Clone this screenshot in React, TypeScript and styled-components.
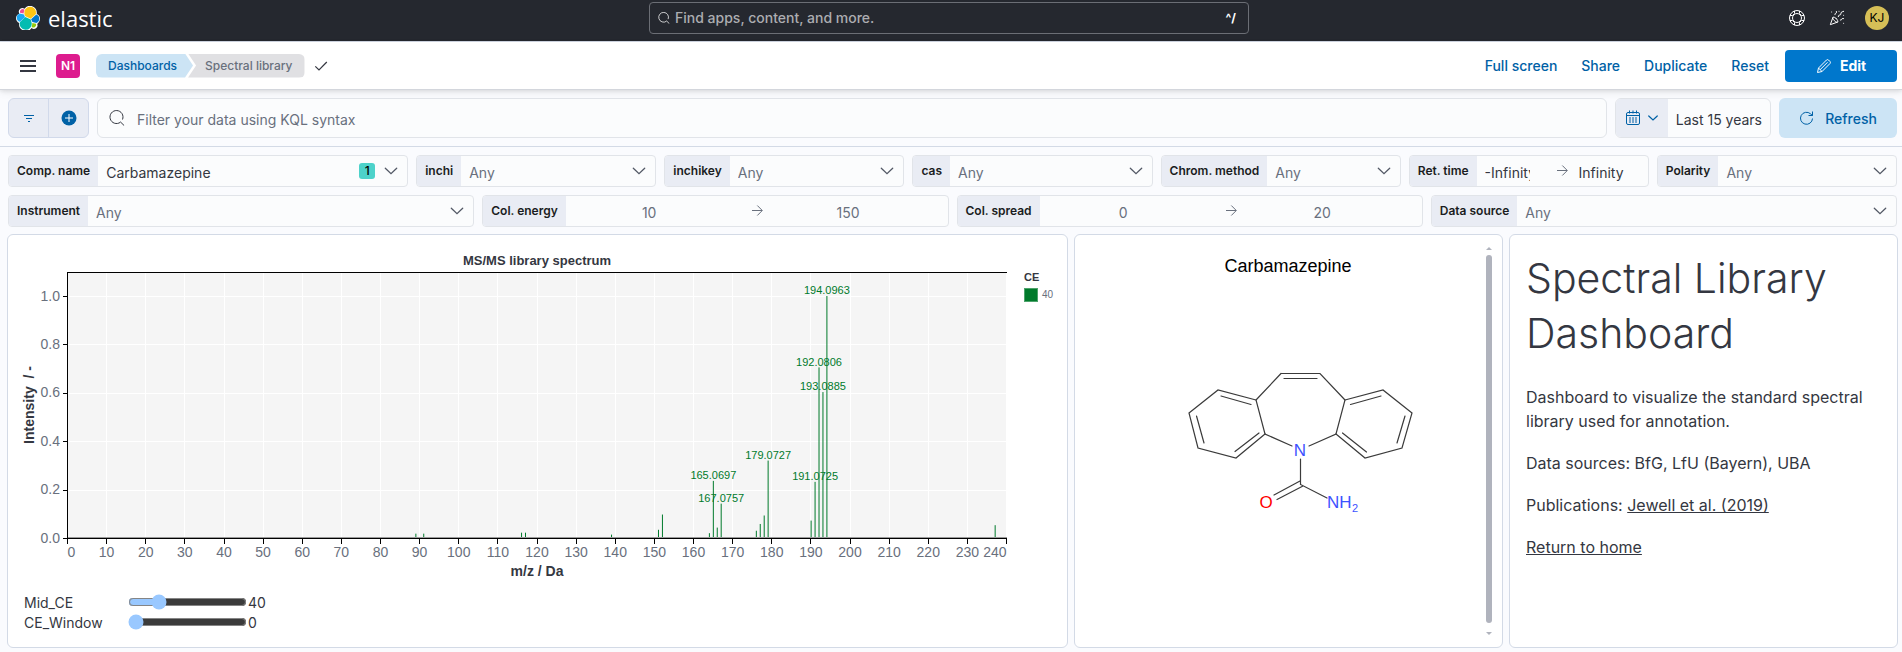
import React, { useState } from "react";
import styled, { createGlobalStyle } from "styled-components";
import { PartyPopper } from "lucide-react";

const Global = createGlobalStyle`
  * { box-sizing: border-box; }
  body { margin: 0; background: #fafbfe; color: #343741; font-family: Inter, "Liberation Sans", sans-serif; font-size: 14px; }
  button, input, select { font: inherit; color: inherit; margin: 0; }
  svg { display: block; flex: none; }
`;

const chartFont = '"Liberation Sans", Arial, sans-serif';

const TopBar = styled.header`
  display: grid;
  grid-template-columns: minmax(0, 633fr) 600px minmax(0, 640fr);
  align-items: center;
  height: 42px;
  padding: 0 13px 6px 16px;
  background: #25282f;
  border-bottom: 1px solid #d3dae6;
`;
const Brand = styled.a`
  display: flex;
  align-items: center;
  gap: 8px;
  color: #fff;
  text-decoration: none;
  font-family: "Open Sans", "Noto Sans", sans-serif;
  font-size: 22px;
  line-height: 24px;
`;
const GlobalSearch = styled.label`
  display: flex;
  align-items: center;
  gap: 5px;
  height: 32px;
  padding: 0 12px 0 8px;
  border: 1px solid #6b6e75;
  border-radius: 4px;
  color: #fff;
  input {
    flex: 1;
    min-width: 0;
    padding: 0;
    border: 0;
    outline: 0;
    background: none;
    font-weight: 500;
    &::placeholder { color: #acadb1; opacity: 1; }
  }
  kbd { font: 700 12px Inter, sans-serif; }
`;
const TopActions = styled.div`
  display: flex;
  justify-content: flex-end;
  align-items: center;
  gap: 24px;
`;
const IconButton = styled.button`
  display: flex;
  padding: 0;
  border: 0;
  background: none;
`;
const UserAvatar = styled.button`
  width: 24px;
  height: 24px;
  margin-left: -4px;
  padding: 0;
  border: 0;
  border-radius: 50%;
  background: #d6bf57;
  color: #000;
  font-size: 12px;
`;

const NavBar = styled.nav`
  position: relative;
  display: flex;
  align-items: center;
  height: 48px;
  padding: 0 5px 0 20px;
  background: #fff;
  border-bottom: 1px solid #d3d6dc;
  box-shadow: 0 1px 4px rgba(0, 0, 0, 0.1), 0 3px 8px rgba(0, 0, 0, 0.06);
`;
const SpaceAvatar = styled.button`
  width: 24px;
  height: 24px;
  margin: 0 16px 0 20px;
  padding: 0;
  border: 0;
  border-radius: 4px;
  background: #dd1c8e;
  color: #fff;
  font-size: 12px;
  font-weight: 600;
`;
const Crumbs = styled.div`
  display: flex;
  align-items: center;
  font-size: 12px;
  font-weight: 500;
  line-height: 24px;
`;
const CrumbLink = styled.a`
  padding: 0 16px 0 12px;
  border-radius: 6px 0 0 6px;
  background: #cce4f5;
  color: #0061a6;
  text-decoration: none;
  clip-path: polygon(0 0, calc(100% - 8px) 0, 100% 50%, calc(100% - 8px) 100%, 0 100%);
`;
const CrumbCurrent = styled.span`
  margin: 0 8px 0 -5px;
  padding: 0 12px 0 17px;
  border-radius: 0 6px 6px 0;
  background: #e0e0e3;
  color: #69707d;
  clip-path: polygon(0 0, 100% 0, 100% 100%, 0 100%, 8px 50%);
`;
const NavActions = styled.div`
  display: flex;
  align-items: center;
  gap: 8px;
  margin-left: auto;
`;
const TextButton = styled.button`
  height: 32px;
  padding: 0 8px;
  border: 0;
  background: none;
  color: #0061a6;
  font-weight: 500;
`;
const SolidButton = styled.button<{ $tone: "primary" | "soft" }>`
  display: flex;
  align-items: center;
  justify-content: center;
  gap: ${(p) => (p.$tone === "primary" ? 8 : 10)}px;
  width: ${(p) => (p.$tone === "primary" ? 112 : 118)}px;
  height: ${(p) => (p.$tone === "primary" ? 32 : 40)}px;
  padding: 0;
  border: 0;
  border-radius: ${(p) => (p.$tone === "primary" ? 4 : 6)}px;
  background: ${(p) => (p.$tone === "primary" ? "#0077cc" : "#cce4f5")};
  color: ${(p) => (p.$tone === "primary" ? "#fff" : "#0061a6")};
  font-weight: ${(p) => (p.$tone === "primary" ? 700 : 500)};
`;

const QueryBar = styled.section`
  display: flex;
  gap: 8px;
  padding: 8px 5px 8px 8px;
  border-bottom: 1px solid #d3dae6;
`;
const FilterGroup = styled.div`
  display: flex;
  width: 81px;
  height: 40px;
  border: 1px solid #d1d9ea;
  border-radius: 6px;
  background: #e9ecf4;
  overflow: hidden;
  button {
    flex: 1;
    display: flex;
    align-items: center;
    justify-content: center;
    padding: 0;
    border: 0;
    background: none;
  }
  button + button { border-left: 1px solid #d1d9ea; }
`;
const QueryInput = styled.label`
  flex: 1;
  display: flex;
  align-items: center;
  gap: 12px;
  height: 40px;
  padding: 0 11px;
  border: 1px solid #e1e4e9;
  border-radius: 6px;
  background: #fbfcfd;
  input {
    flex: 1;
    min-width: 0;
    padding: 2px 0 0;
    border: 0;
    outline: 0;
    background: none;
    &::placeholder { color: #69707d; opacity: 1; }
  }
`;
const DatePicker = styled.div`
  display: flex;
  height: 40px;
  border: 1px solid #e1e4e9;
  border-radius: 6px;
  background: #fbfcfd;
  overflow: hidden;
`;
const QuickSelect = styled.button`
  display: flex;
  align-items: center;
  gap: 6px;
  padding: 0 9px;
  border: 0;
  background: #e9ecf4;
  color: #0061a6;
`;
const DateText = styled.button`
  padding: 2px 8px 0;
  border: 0;
  background: none;
`;

const Controls = styled.section`
  display: grid;
  gap: 8px;
  padding: 8px 5px 7px 8px;
`;
const ControlRow = styled.div`
  display: flex;
  gap: 8px;
`;
const Control = styled.div<{ $grow: number }>`
  flex: ${(p) => p.$grow} 1 ${(p) => p.$grow}px;
  min-width: 0;
  display: flex;
  align-items: center;
  height: 32px;
  border: 1px solid #e1e4e9;
  border-radius: 4px;
  background: #fbfcfd;
  overflow: hidden;
  & > label {
    flex: none;
    padding: 0 8px;
    background: #e9ecf4;
    color: #1a1c21;
    font-size: 12px;
    font-weight: 600;
    line-height: 30px;
  }
`;
const Select = styled.select<{ $filled: boolean }>`
  flex: 1;
  min-width: 0;
  height: 30px;
  padding: 2px 8px 0;
  border: 0;
  outline: 0;
  appearance: none;
  background: none;
  color: ${(p) => (p.$filled ? "#343741" : "#69707d")};
`;
const CountBadge = styled.span`
  width: 16px;
  margin-right: 8px;
  border-radius: 3px;
  background: #4dd2ca;
  color: #000;
  font-size: 12px;
  font-weight: 500;
  line-height: 16px;
  text-align: center;
`;
const ChevronBox = styled.span`
  padding-right: 8px;
  color: #535966;
`;
const Range = styled.div<{ $strong: boolean }>`
  flex: 1;
  min-width: 0;
  display: flex;
  align-items: center;
  padding-right: 16px;
  color: #69707d;
  input {
    flex: 1 1 0;
    width: 0;
    height: 30px;
    padding: 2px 8px 0;
    border: 0;
    outline: 0;
    background: none;
    text-align: center;
    color: ${(p) => (p.$strong ? "#343741" : "#69707d")};
  }
  svg { margin-left: 16px; }
`;

const Panels = styled.main`
  display: grid;
  grid-template-columns: minmax(0, 1061fr) minmax(0, 429fr) minmax(0, 389fr);
  gap: 6px;
  padding: 0 4px 4px 7px;
`;
const Panel = styled.section`
  display: flex;
  min-height: 414px;
  border: 1px solid #d3dae6;
  border-radius: 6px;
  background: #fff;
`;
const ChartPanel = styled(Panel)`
  flex-direction: column;
`;
const Drawing = styled.svg`
  width: 100%;
  height: auto;
  font-family: ${chartFont};
`;
const Sliders = styled.div`
  padding: 7px 16px 0;
`;
const SliderRow = styled.div`
  display: flex;
  align-items: center;
  height: 20px;
  label { width: 104px; }
  input { width: 119px; height: 16px; margin-right: 1px; color-scheme: dark; }
`;
const StructurePanel = styled(Panel)`
  position: relative;
  align-items: flex-start;
`;
const Scrollbar = styled.div`
  position: absolute;
  top: 12px;
  right: 10px;
  bottom: 12px;
  display: flex;
  flex-direction: column;
  gap: 5px;
  width: 6px;
  color: #b0b3bd;
`;
const Thumb = styled.div`
  flex: 1;
  margin-bottom: 4px;
  border-radius: 3px;
  background: #b0b3bd;
`;
const NotePanel = styled(Panel)`
  display: block;
  padding: 16px;
  font-size: 16px;
  line-height: 24px;
  h1 {
    margin: 0 0 24px;
    font-size: 41px;
    font-weight: 300;
    line-height: 55px;
  }
  p { margin: 0 0 18px; }
  a { color: inherit; text-decoration: underline; }
`;

const ElasticMark = () => (
  <svg width="24" height="24" viewBox="0 0 24 24" aria-hidden="true">
    <path fill="#fff" d="M24 12.5c0-2.100-1.300-3.900-3.200-4.600A6.900 6.900 0 0 0 20.800 6.700 6.800 6.800 0 0 0 8.500 2.700 3.600 3.600 0 0 0 3 6.800c.0.300.1.700.2 1C1.300 8.500 0 10.300 0 12.300c0 2.100 1.300 3.900 3.200 4.600a6.900 6.900 0 0 0 12.400 5.200 3.600 3.600 0 0 0 5.600-4.200C22.900 16.400 24 14.600 24 12.500z" />
    <path fill="#fec514" d="M9.400 10.300l5.300 2.400 5.300-4.700A6 6 0 1 0 8.300 8z" />
    <path fill="#02bcb1" d="M4 16.100a6 6 0 1 0 11.700 1l-.9-3.500-5.500-2.600z" />
    <path fill="#f04e98" d="M4 6.700l3.600.9.800-4.100A2.900 2.900 0 0 0 4 6.700z" />
    <path fill="#1ba9f5" d="M3.700 7.500a4.400 4.400 0 0 0 .1 8.300l5.200-4.600-1-2.700z" />
    <path fill="#93c90e" d="M15.700 21a2.900 2.900 0 0 0 4.400-3.200l-3.700-.9z" />
    <path fill="#07c" d="M16.400 16l4 .9a4.400 4.400 0 0 0-.1-8.300l-5.200 4.600z" />
  </svg>
);
const SearchIcon = ({ size }: { size: number }) => (
  <svg width={size} height={size} viewBox="0 0 16 16" fill="none" stroke="currentColor" aria-hidden="true">
    <path d="M11.300 12.300A6.500 6.500 0 1 1 13.500 9.500M11.300 11.800l3.800 3.700" />
  </svg>
);
const Chevron = ({ size = 16 }: { size?: number }) => (
  <svg width={size} height={size} viewBox="0 0 16 16" fill="none" stroke="currentColor" strokeWidth={size < 16 ? 1.6 : 1.3} strokeLinecap="round" aria-hidden="true">
    <path d="M2.300 5.300 8 10.700l5.700-5.400" />
  </svg>
);
const ArrowRight = () => (
  <svg width="16" height="16" viewBox="0 0 16 16" fill="none" stroke="currentColor" aria-hidden="true">
    <path d="M3 7.500h10M8.300 2.500l5 5-5 5" />
  </svg>
);
const LifeRing = () => (
  <svg width="16" height="16" viewBox="0 0 16 16" fill="none" stroke="#fff" aria-hidden="true">
    <circle cx="8" cy="8" r="7.500" />
    <circle cx="8" cy="8" r="4.500" />
    <path d="M5.500 1v2.500L3.500 5.500H1M10.500 1v2.500l2 2H15M5.500 15v-2.500l-2-2H1M10.500 15v-2.500l2-2H15" />
  </svg>
);
const CalendarIcon = () => (
  <svg width="16" height="16" viewBox="0 0 16 16" fill="none" stroke="#0061a6" aria-hidden="true">
    <rect x="1.500" y="2.500" width="13" height="12" rx="1.500" />
    <path d="M1.500 5.500h13M4.500.5v3M8 .5v3M11.500.5v3" />
    <path d="M4 8h8M4 10h8M4 12h8" strokeDasharray="2 1" />
  </svg>
);

type SelectProps = { id: string; label: string; value?: string; count?: number; grow?: number };
const SelectControl = ({ id, label, value, count, grow = 240 }: SelectProps) => (
  <Control $grow={grow}>
    <label htmlFor={id}>{label}</label>
    <Select id={id} $filled={!!value}>
      <option>{value ?? "Any"}</option>
    </Select>
    {count !== undefined && <CountBadge>{count}</CountBadge>}
    <ChevronBox><Chevron /></ChevronBox>
  </Control>
);
type RangeProps = { id: string; label: string; from: string; to: string; strong?: boolean; grow?: number };
const RangeControl = ({ id, label, from, to, strong = false, grow = 240 }: RangeProps) => (
  <Control $grow={grow}>
    <label htmlFor={id}>{label}</label>
    <Range $strong={strong}>
      <input id={id} defaultValue={from} />
      <ArrowRight />
      <input aria-label={`${label} upper bound`} defaultValue={to} />
    </Range>
  </Control>
);

const plot = { left: 59.5, right: 998.5, top: 37.5, base: 303.5 };
const px = (mz: number) => plot.left + (mz * (plot.right - plot.left)) / 240;
const py = (v: number) => plot.base - v * 242;
const snap = (n: number) => Math.floor(n) + 0.5;

const peaks: { mz: number; h: number; label?: boolean }[] = [
  { mz: 89.04, h: 0.018 }, { mz: 91.05, h: 0.018 }, { mz: 116.05, h: 0.022 }, { mz: 117.06, h: 0.022 },
  { mz: 139.05, h: 0.014 }, { mz: 151.05, h: 0.034 }, { mz: 152.06, h: 0.097 }, { mz: 164.06, h: 0.02 },
  { mz: 165.0697, h: 0.236, label: true }, { mz: 166.07, h: 0.043 }, { mz: 167.0757, h: 0.142, label: true },
  { mz: 176.06, h: 0.03 }, { mz: 177.06, h: 0.058 }, { mz: 178.07, h: 0.093 },
  { mz: 179.0727, h: 0.32, label: true }, { mz: 190.06, h: 0.072 }, { mz: 191.0725, h: 0.232, label: true },
  { mz: 192.0806, h: 0.705, label: true }, { mz: 193.0885, h: 0.603, label: true },
  { mz: 194.0963, h: 1, label: true }, { mz: 237.1, h: 0.053 },
];
const xTicks = Array.from({ length: 25 }, (_, i) => i * 10);
const yTicks = [0, 0.2, 0.4, 0.6, 0.8, 1];

const Spectrum = () => (
  <Drawing viewBox="0 0 1059 350" role="img" aria-label="MS/MS library spectrum">
    <rect x={plot.left} y={plot.top} width={plot.right - plot.left} height={plot.base - plot.top} fill="#f5f5f5" />
    <path d="M59 37.500H999M59.500 37V304" stroke="#000" fill="none" />
    <g stroke="#fff">
      {xTicks.slice(1).map((t) => <line key={t} x1={snap(px(t))} x2={snap(px(t))} y1="38" y2="303" />)}
      {yTicks.slice(1).map((t) => <line key={t} x1="60" x2="999" y1={snap(py(t))} y2={snap(py(t))} />)}
    </g>
    <g fill="#007a2b">
      {peaks.map((p) => (
        <rect key={p.mz} x={px(p.mz) - 0.5} y={py(p.h) - 0.5} width="1" height={p.h * 242} />
      ))}
    </g>
    <g fill="#007a2b" fontSize="11" textAnchor="middle">
      {peaks.filter((p) => p.label).map((p) => (
        <text key={p.mz} x={px(p.mz)} y={Math.round(py(p.h) - 2.1)}>{p.mz.toFixed(4)}</text>
      ))}
    </g>
    <path d="M60 302.500H999" stroke="#999" />
    <g stroke="#000">
      <path d="M59 303.500H999" />
      {xTicks.map((t) => <line key={t} x1={snap(px(t))} x2={snap(px(t))} y1="304" y2="309" />)}
      {yTicks.map((t) => <line key={t} x1="55" x2="59" y1={snap(py(t))} y2={snap(py(t))} />)}
    </g>
    <g fill="#69707d" fontSize="14">
      {xTicks.map((t) => (
        <text key={t} x={px(t)} y="322" textAnchor={t === 0 ? "start" : t === 240 ? "end" : "middle"}>{t}</text>
      ))}
      {yTicks.map((t) => <text key={t} x="52" y={Math.round(py(t)) + 4} textAnchor="end">{t.toFixed(1)}</text>)}
    </g>
    <g fill="#343741" fontWeight="700">
      <text x="529" y="30" fontSize="13" textAnchor="middle">MS/MS library spectrum</text>
      <text x="529" y="341" fontSize="14" textAnchor="middle">m/z / Da</text>
      <text transform="translate(26 170) rotate(-90)" fontSize="14" textAnchor="middle">{"Intensity\u00a0 / -"}</text>
      <text x="1016" y="46" fontSize="11">CE</text>
    </g>
    <rect x="1016.500" y="53.500" width="13" height="13" fill="#007a2b" stroke="#4da36b" />
    <text x="1034" y="63" fontSize="10" fill="#69707d">40</text>
  </Drawing>
);

const Molecule = () => (
  <Drawing viewBox="0 0 427 400" role="img" aria-label="Structure of Carbamazepine">
    <text x="213" y="37" fontSize="18" textAnchor="middle" fill="#000">Carbamazepine</text>
    <g stroke="#3b3b3b" strokeWidth="1.200" fill="none" strokeLinecap="round">
      <path d="M206 138.500H245L270 165L261 199L234 211M206 138.500L181 165L190 199L217 211M209 143.500H242" />
      <path d="M181 165L143 155L114 178L123 213L161 223L190 199M176 169.500L146 161M121.500 181L129 208M160 216.500L184 198" />
      <path d="M270 165L308 155L337 178L327 213L290 223L261 199M275.500 169.500L306 161M330 181L322 208M291.500 217L267.500 198" />
      <path d="M225.500 224V249.500L252 263M225 246L199 260M228 251L202 264.500" />
    </g>
    <g fill="#3d52ff" fontSize="17">
      <text x="225" y="221" textAnchor="middle">N</text>
      <text x="252" y="273">NH</text>
      <text x="277" y="277" fontSize="11">2</text>
    </g>
    <text x="191" y="273" fontSize="17" textAnchor="middle" fill="#f00">O</text>
  </Drawing>
);

export default function App() {
  const [mid, setMid] = useState(40);
  const [win, setWin] = useState(0);
  return (
    <>
      <Global />
      <TopBar>
        <Brand href="#"><ElasticMark />elastic</Brand>
        <GlobalSearch>
          <SearchIcon size={12} />
          <input aria-label="Find apps, content, and more" placeholder="Find apps, content, and more." />
          <kbd>^/</kbd>
        </GlobalSearch>
        <TopActions>
          <IconButton aria-label="Help"><LifeRing /></IconButton>
          <IconButton aria-label="News"><PartyPopper size={16} color="#fff" strokeWidth={1.5} /></IconButton>
          <UserAvatar>KJ</UserAvatar>
        </TopActions>
      </TopBar>
      <NavBar>
        <IconButton aria-label="Menu">
          <svg width="16" height="16" viewBox="0 0 16 16" fill="#343741"><path d="M0 2h16v2H0zM0 7h16v2H0zM0 12h16v2H0z" /></svg>
        </IconButton>
        <SpaceAvatar>N1</SpaceAvatar>
        <Crumbs>
          <CrumbLink href="#">Dashboards</CrumbLink>
          <CrumbCurrent>Spectral library</CrumbCurrent>
        </Crumbs>
        <svg width="16" height="16" viewBox="0 0 16 16" fill="none" stroke="#343741" strokeWidth="1.200"><path d="M2.300 8.300l3.700 3.700 7.800-8" /></svg>
        <NavActions>
          <TextButton>Full screen</TextButton>
          <TextButton>Share</TextButton>
          <TextButton>Duplicate</TextButton>
          <TextButton>Reset</TextButton>
          <SolidButton $tone="primary">
            <svg width="16" height="16" viewBox="0 0 16 16" fill="none" stroke="#fff"><path d="M1.500 14.500l1-4.500 8-8a1.500 1.500 0 0 1 2 0l1.500 1.500a1.500 1.500 0 0 1 0 2l-8 8zM2.500 10l3.500 3.500M4 11.800l7.500-7.500" /></svg>
            Edit
          </SolidButton>
        </NavActions>
      </NavBar>
      <QueryBar>
        <FilterGroup>
          <button aria-label="Saved queries">
            <svg width="16" height="16" viewBox="0 0 16 16" stroke="#0061a6"><path d="M3 5.500h10M5 8.500h6M7 11.500h2" /></svg>
          </button>
          <button aria-label="Add filter">
            <svg width="16" height="16" viewBox="0 0 16 16"><circle cx="8" cy="8" r="7.500" fill="#0061a6" /><path d="M8 4v8M4 8h8" stroke="#fff" /></svg>
          </button>
        </FilterGroup>
        <QueryInput>
          <SearchIcon size={16} />
          <input aria-label="Query" placeholder="Filter your data using KQL syntax" />
        </QueryInput>
        <DatePicker>
          <QuickSelect aria-label="Date quick select"><CalendarIcon /><Chevron size={12} /></QuickSelect>
          <DateText>Last 15 years</DateText>
        </DatePicker>
        <SolidButton $tone="soft">
          <svg width="16" height="16" viewBox="0 0 16 16" fill="none" stroke="#0061a6"><path d="M13.500 8.500a6 6 0 1 1-2-4.700l2 1.700M13.500 1.500v4h-4" /></svg>
          Refresh
        </SolidButton>
      </QueryBar>
      <Controls>
        <ControlRow>
          <SelectControl id="name" label="Comp. name" value="Carbamazepine" count={1} grow={400} />
          <SelectControl id="inchi" label="inchi" />
          <SelectControl id="inchikey" label="inchikey" />
          <SelectControl id="cas" label="cas" />
          <SelectControl id="method" label="Chrom. method" />
          <RangeControl id="rt" label="Ret. time" from="-Infinity" to="Infinity" strong />
          <SelectControl id="polarity" label="Polarity" />
        </ControlRow>
        <ControlRow>
          <SelectControl id="instrument" label="Instrument" />
          <RangeControl id="energy" label="Col. energy" from="10" to="150" />
          <RangeControl id="spread" label="Col. spread" from="0" to="20" />
          <SelectControl id="source" label="Data source" />
        </ControlRow>
      </Controls>
      <Panels>
        <ChartPanel>
          <Spectrum />
          <Sliders>
            <SliderRow>
              <label htmlFor="mid">Mid_CE</label>
              <input id="mid" type="range" min="5" max="160" value={mid} onChange={(e) => setMid(+e.target.value)} />
              <span>{mid}</span>
            </SliderRow>
            <SliderRow>
              <label htmlFor="window">CE_Window</label>
              <input id="window" type="range" min="0" max="100" value={win} onChange={(e) => setWin(+e.target.value)} />
              <span>{win}</span>
            </SliderRow>
          </Sliders>
        </ChartPanel>
        <StructurePanel>
          <Molecule />
          <Scrollbar aria-hidden="true">
            <svg width="6" height="3" viewBox="0 0 6 3" fill="currentColor"><path d="M0 3l3-3 3 3z" /></svg>
            <Thumb />
            <svg width="6" height="3" viewBox="0 0 6 3" fill="currentColor"><path d="M0 0l3 3 3-3z" /></svg>
          </Scrollbar>
        </StructurePanel>
        <NotePanel>
          <h1>Spectral Library Dashboard</h1>
          <p>Dashboard to visualize the standard spectral library used for annotation.</p>
          <p>Data sources: BfG, LfU (Bayern), UBA</p>
          <p>Publications: <a href="#">Jewell et al. (2019)</a></p>
          <p><a href="#">Return to home</a></p>
        </NotePanel>
      </Panels>
    </>
  );
}
